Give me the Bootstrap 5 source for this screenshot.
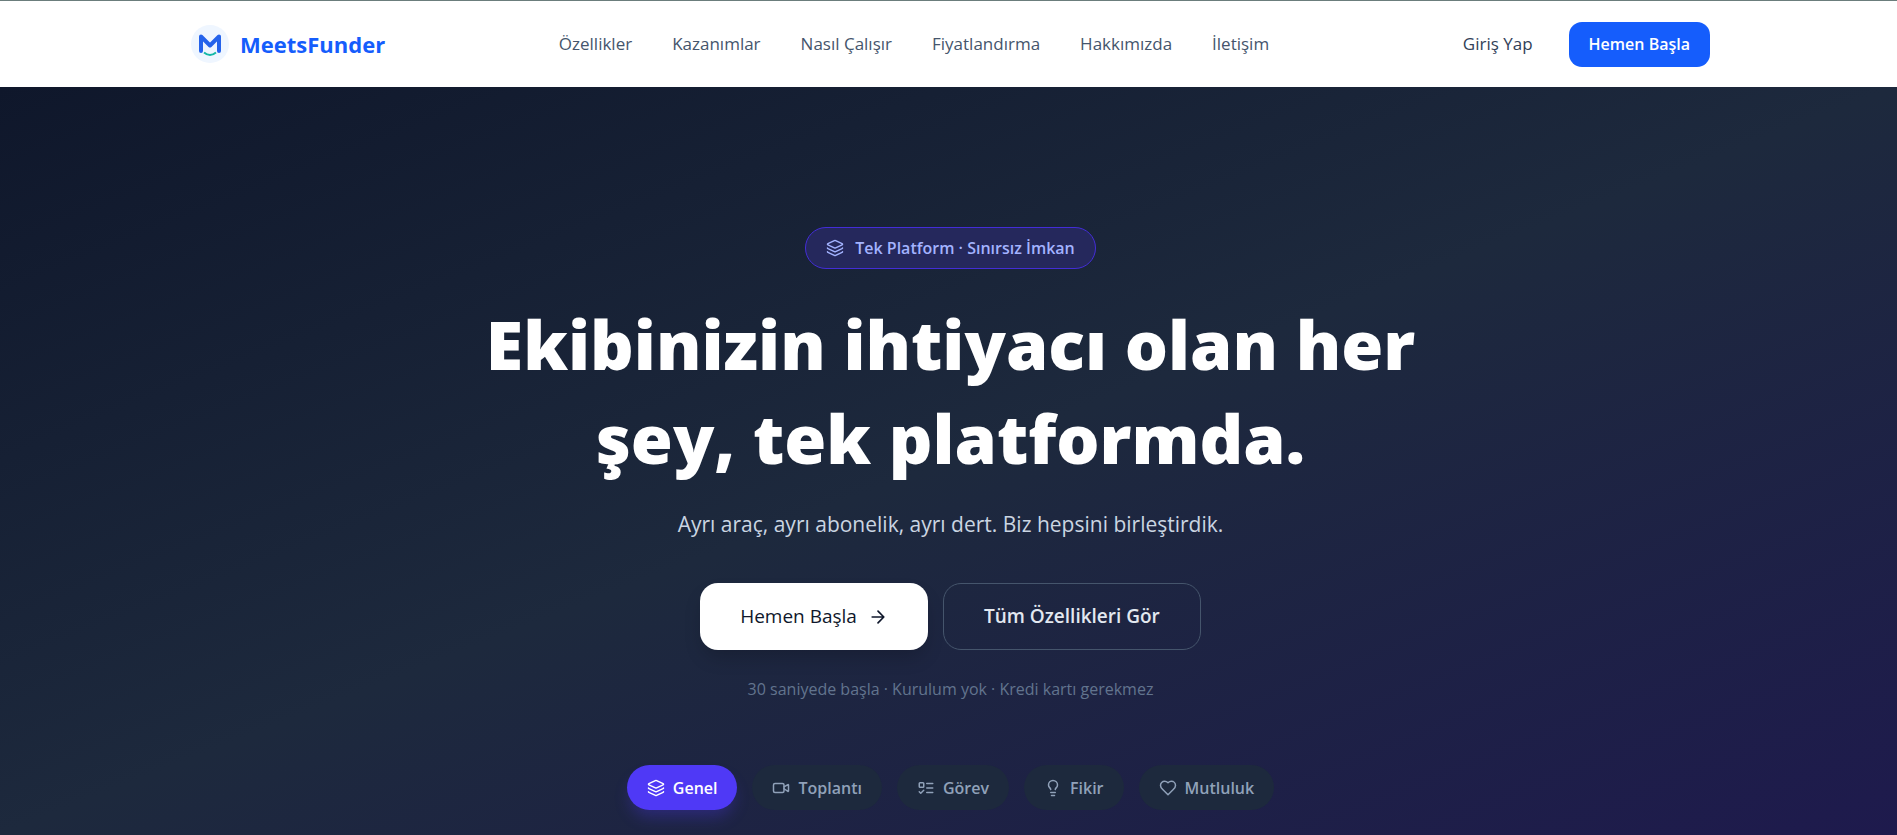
<!DOCTYPE html>
<html lang="tr">
<head>
<meta charset="utf-8">
<meta name="viewport" content="width=device-width, initial-scale=1">
<title>MeetsFunder</title>
<link href="https://cdn.jsdelivr.net/npm/bootstrap@5.3.0/dist/css/bootstrap.min.css" rel="stylesheet">
<style>
  body { font-family: "Open Sans", "Noto Sans", sans-serif; font-size: 16px; background: #1d293d; }
  .site-wrap { max-width: 1519px; }
  .site-header { background: #fff; border-top: 1px solid #6b7d7c; height: 87px; padding-left: 4px; }
  .brand-link { gap: 11px; }
  .brand-name { font-size: 22px; font-weight: 700; color: #155dfc; }
  .menu { gap: 40px; }
  .menu a { color: #45556c; font-size: 17px; text-decoration: none; }
  .login { color: #314158; font-size: 17px; text-decoration: none; padding: 0 20px; }
  .btn-cta { --bs-btn-bg: #155dfc; --bs-btn-color: #fff; --bs-btn-hover-bg: #1447e6; --bs-btn-hover-color: #fff; border: 0; border-radius: 13px; font-size: 16px; font-weight: 600; padding: 0 20px; height: 45px; }
  .hero { background: linear-gradient(to bottom right, #0f172b, #1d293d 50%, #1e1a4d); min-height: calc(100vh - 87px); padding: 140px 0 25px 4px; }
  .hero-tag { height: 42px; padding: 0 20px; gap: 11px; border: 1px solid #432dd7; background: #25285c; color: #a3b3ff; font-weight: 600; }
  h1 { font-size: 68px; line-height: 94px; font-weight: 800; color: #fff; max-width: 1000px; margin: 28px 0 21px; }
  .lead-text { font-size: 21px; line-height: 36px; color: #cad5e2; margin-bottom: 41px; }
  .hero-actions { gap: 15px; }
  .btn-hero { font-size: 19px; font-weight: 600; height: 67px; padding: 0 40px; border-radius: 18px; }
  .btn-start { --bs-btn-bg: #fff; --bs-btn-color: #0f172b; --bs-btn-hover-bg: #f1f5f9; border: 0; font-weight: 500; box-shadow: 0 10px 20px -4px #0003; gap: 11px; }
  .btn-all { --bs-btn-color: #e2e8f0; --bs-btn-border-color: #45556c; --bs-btn-hover-color: #fff; --bs-btn-hover-border-color: #90a1b9; }
  .note { color: #62748e; font-size: 16px; margin: 26px 0 0; line-height: 26px; }
  .tabs { gap: 15px; margin-top: 63px; }
  .btn-tab { --bs-btn-bg: #1d293d; --bs-btn-color: #90a1b9; --bs-btn-hover-bg: #314158; --bs-btn-hover-color: #fff; border: 0; border-radius: 23px; height: 45px; padding: 0 20px; font-weight: 600; font-size: 16px; }
  .btn-tab.current { --bs-btn-bg: #4f39f6; --bs-btn-color: #fff; box-shadow: 0 10px 16px -3px #4f39f64d; }
  .ico { fill: none; stroke: currentColor; stroke-width: 2; stroke-linecap: round; stroke-linejoin: round; flex: none; }
</style>
<script src="https://cdn.jsdelivr.net/npm/bootstrap@5.3.0/dist/js/bootstrap.bundle.min.js"></script>
</head>
<body>
<header class="site-header d-flex align-items-center">
  <div class="site-wrap container-fluid px-0 d-flex align-items-center justify-content-between">
    <a href="#" class="brand-link d-flex align-items-center text-decoration-none">
      <svg width="38" height="38" viewBox="0 0 38 38" aria-hidden="true">
        <circle cx="19" cy="19" r="19" fill="#eff6ff"/>
        <path d="M10 26V11.500L19 20.500 28 11.500V26" fill="none" stroke="#2563eb" stroke-width="4" stroke-linecap="round" stroke-linejoin="round"/>
        <path d="M13 27.500Q19 32.500 25 27.500" fill="none" stroke="#14b8a6" stroke-width="2"/>
      </svg>
      <span class="brand-name">MeetsFunder</span>
    </a>
    <nav class="menu d-flex">
      <a href="#">Özellikler</a><a href="#">Kazanımlar</a><a href="#">Nasıl Çalışır</a><a href="#">Fiyatlandırma</a><a href="#">Hakkımızda</a><a href="#">İletişim</a>
    </nav>
    <div class="d-flex align-items-center gap-3">
      <a href="#" class="login">Giriş Yap</a>
      <button type="button" class="btn btn-cta">Hemen Başla</button>
    </div>
  </div>
</header>
<main class="hero d-flex flex-column align-items-center text-center">
  <div class="hero-tag d-flex align-items-center rounded-pill">
    <svg class="ico" width="18" height="18" viewBox="0 0 24 24"><path d="M12.830 2.180a2 2 0 0 0-1.660 0L2.600 6.080a1 1 0 0 0 0 1.830l8.580 3.910a2 2 0 0 0 1.660 0l8.580-3.900a1 1 0 0 0 0-1.830z"/><path d="M2 12a1 1 0 0 0 .58.910l8.600 3.910a2 2 0 0 0 1.650 0l8.580-3.900A1 1 0 0 0 22 12"/><path d="M2 17a1 1 0 0 0 .58.910l8.600 3.910a2 2 0 0 0 1.650 0l8.580-3.900A1 1 0 0 0 22 17"/></svg>
    <span>Tek Platform · Sınırsız İmkan</span>
  </div>
  <h1>Ekibinizin ihtiyacı olan her <br>şey, tek platformda.</h1>
  <p class="lead-text">Ayrı araç, ayrı abonelik, ayrı dert. Biz hepsini birleştirdik.</p>
  <div class="hero-actions d-flex">
    <button type="button" class="btn btn-hero btn-start d-flex align-items-center">Hemen Başla
      <svg class="ico" width="20" height="20" viewBox="0 0 24 24"><path d="M5 12h14M12 5l7 7-7 7"/></svg>
    </button>
    <button type="button" class="btn btn-hero btn-all">Tüm Özellikleri Gör</button>
  </div>
  <p class="note">30 saniyede başla · Kurulum yok · Kredi kartı gerekmez</p>
  <div class="tabs d-flex">
    <button type="button" class="btn btn-tab current d-flex align-items-center gap-2"><svg class="ico" width="18" height="18" viewBox="0 0 24 24"><path d="M12.830 2.180a2 2 0 0 0-1.660 0L2.600 6.080a1 1 0 0 0 0 1.830l8.580 3.910a2 2 0 0 0 1.660 0l8.580-3.900a1 1 0 0 0 0-1.830z"/><path d="M2 12a1 1 0 0 0 .58.910l8.600 3.910a2 2 0 0 0 1.650 0l8.580-3.900A1 1 0 0 0 22 12"/><path d="M2 17a1 1 0 0 0 .58.910l8.600 3.910a2 2 0 0 0 1.650 0l8.580-3.900A1 1 0 0 0 22 17"/></svg>Genel</button>
    <button type="button" class="btn btn-tab d-flex align-items-center gap-2"><svg class="ico" width="18" height="18" viewBox="0 0 24 24"><path d="m16 13 5.220 3.480a.5.5 0 0 0 .78-.420V7.870a.5.5 0 0 0-.750-.430L16 10.500"/><rect x="2" y="6" width="14" height="12" rx="2"/></svg>Toplantı</button>
    <button type="button" class="btn btn-tab d-flex align-items-center gap-2"><svg class="ico" width="18" height="18" viewBox="0 0 24 24"><rect x="3" y="5" width="6" height="6" rx="1"/><path d="m3 17 2 2 4-4M13 6h8M13 12h8M13 18h8"/></svg>Görev</button>
    <button type="button" class="btn btn-tab d-flex align-items-center gap-2"><svg class="ico" width="18" height="18" viewBox="0 0 24 24"><path d="M15 14c.2-1 .7-1.700 1.500-2.500 1-.9 1.500-2.200 1.500-3.500A6 6 0 0 0 6 8c0 1 .2 2.200 1.500 3.500.7.700 1.300 1.500 1.500 2.500M9 18h6M10 22h4"/></svg>Fikir</button>
    <button type="button" class="btn btn-tab d-flex align-items-center gap-2"><svg class="ico" width="18" height="18" viewBox="0 0 24 24"><path d="M19 14c1.490-1.460 3-3.210 3-5.500A5.500 5.500 0 0 0 16.500 3c-1.760 0-3 .5-4.500 2-1.500-1.500-2.740-2-4.500-2A5.500 5.500 0 0 0 2 8.500c0 2.300 1.500 4.050 3 5.500l7 7Z"/></svg>Mutluluk</button>
  </div>
</main>
</body>
</html>
